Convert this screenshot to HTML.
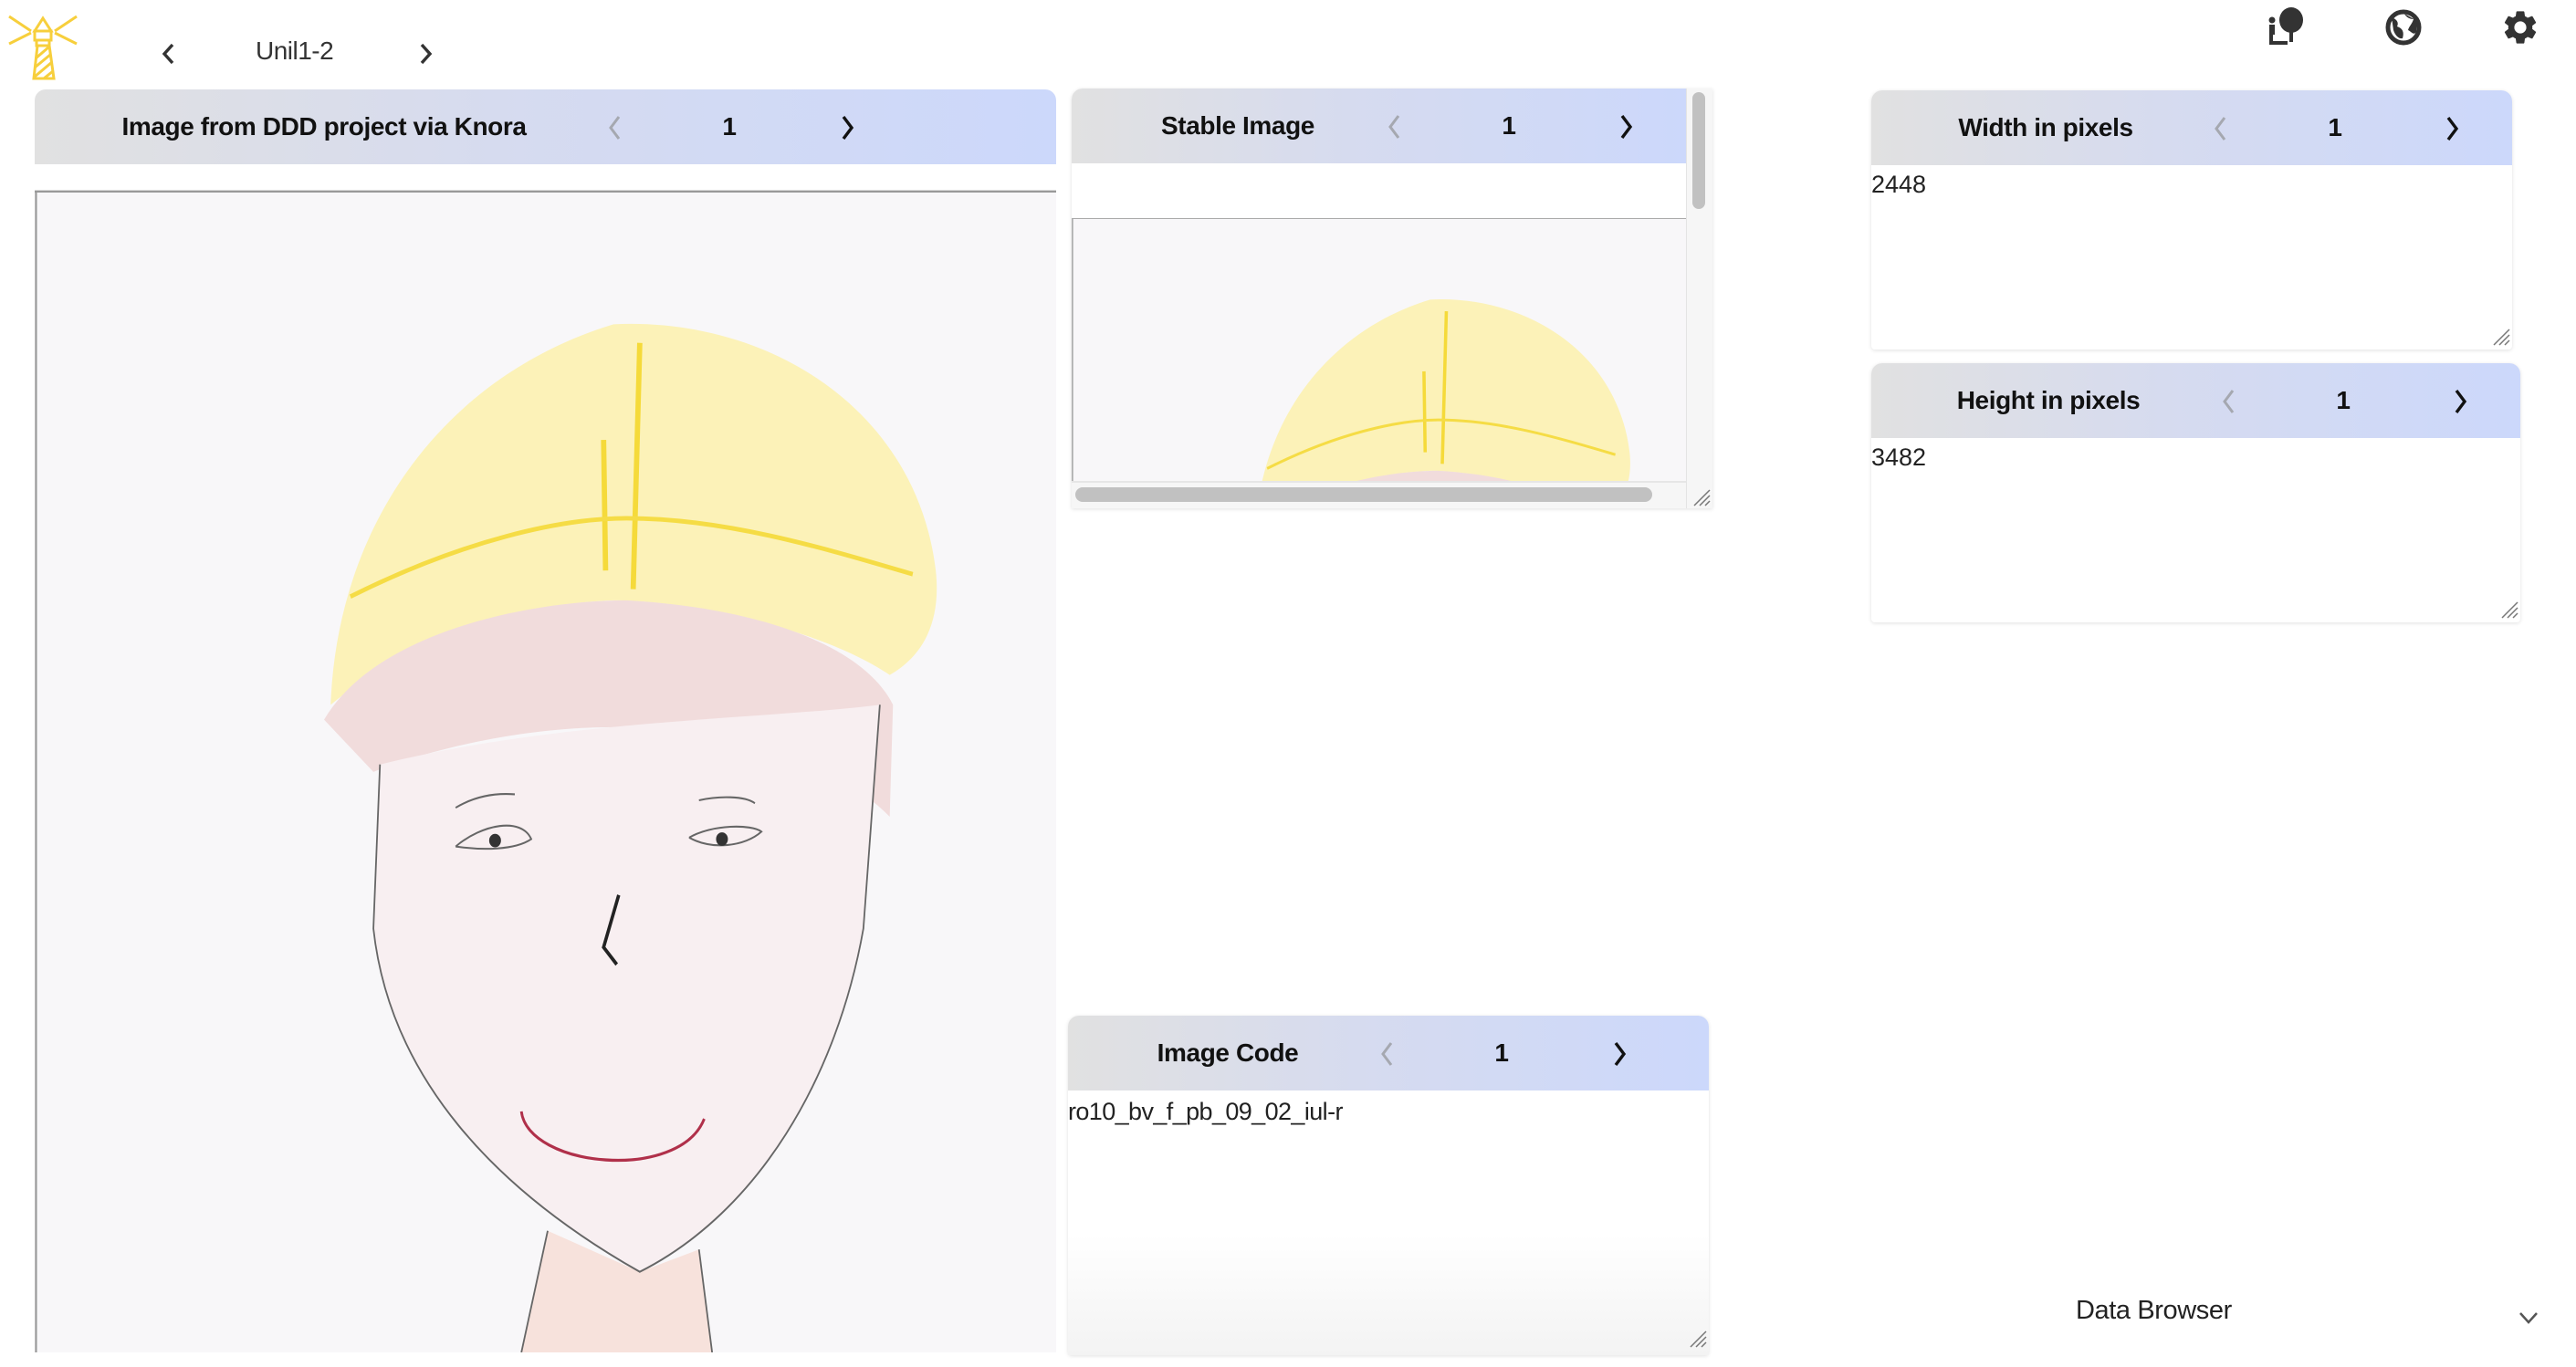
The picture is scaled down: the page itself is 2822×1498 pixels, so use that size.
<!DOCTYPE html>
<html><head><meta charset="utf-8"><style>
*{box-sizing:border-box;margin:0;padding:0}
body{width:2822px;height:1482px;overflow:hidden;background:#fff;font-family:"Liberation Sans",Arial,sans-serif;color:#111;position:relative}
.abs{position:absolute}
.panel{position:absolute;background:#fff;border-radius:12px 12px 4px 4px;box-shadow:0 1px 4px rgba(0,0,0,.12)}
.hdr{position:absolute;left:0;right:0;top:0;height:82px;border-radius:12px 12px 0 0;background:linear-gradient(90deg,#e1e1e1 0%,#d6dbef 45%,#ccd8fb 100%)}
.t{position:absolute;top:0;height:82px;line-height:82px;font-size:28px;font-weight:bold;letter-spacing:-0.4px;white-space:nowrap;transform:translateX(-50%)}
.ch{position:absolute;top:28px}
.val{position:absolute;font-size:27px;color:#222}
.rz{position:absolute;width:22px;height:22px}
</style></head><body>

<svg class="abs" style="left:8px;top:12px" width="78" height="76" viewBox="0 0 78 76" fill="none" stroke="#f7cf3c" stroke-width="3">
<path d="M30 22 L39 8 L48 22 Z"/><rect x="30" y="22" width="18" height="10"/><rect x="32" y="32" width="14" height="6"/>
<path d="M33 38 L29 74 L51 74 L46 38 Z"/>
<path d="M31 52 L45 40 M30 62 L47 48 M30 72 L49 56 M40 74 L50 66"/>
<path d="M2 6 L26 22 M76 6 L52 22 M2 36 L26 24 M76 36 L52 24"/>
</svg>

<svg class="abs" style="left:175px;top:46px" width="18" height="26" viewBox="0 0 18 26"><path d="M14 3 L5 13 L14 23" fill="none" stroke="#333" stroke-width="3.4"/></svg>
<div class="abs" style="left:280px;top:40px;font-size:28px;color:#333;letter-spacing:-0.5px">Unil1-2</div>
<svg class="abs" style="left:458px;top:46px" width="18" height="26" viewBox="0 0 18 26"><path d="M4 3 L13 13 L4 23" fill="none" stroke="#333" stroke-width="3.4"/></svg>

<svg class="abs" style="left:2483px;top:8px" width="46" height="42" viewBox="0 0 46 42" fill="#333">
<circle cx="6" cy="14" r="3.5"/><rect x="3" y="19" width="6" height="11"/><rect x="3" y="37" width="20" height="4"/>
<ellipse cx="27" cy="14" rx="13" ry="14"/><rect x="25" y="24" width="4" height="14"/><rect x="3" y="30" width="4" height="9"/>
</svg>
<svg class="abs" style="left:2612px;top:9px" width="42" height="42" viewBox="0 0 42 42">
<circle cx="21" cy="21" r="17" fill="none" stroke="#333" stroke-width="5"/>
<path d="M8 10 C14 12 16 16 14 20 C20 22 22 26 20 33 C16 34 12 30 10 24 Z" fill="#333"/>
<path d="M22 6 C24 10 28 12 32 12 C30 18 27 20 26 24 C30 26 32 30 35 26 L36 14 Z" fill="#333"/>
</svg>
<svg class="abs" style="left:2739px;top:8px" width="44" height="44" viewBox="0 0 24 24"><path fill="#333" d="M19.14 12.94c.04-.3.06-.61.06-.94s-.02-.64-.07-.94l2.030-1.58a.5.5 0 0 0 .12-.61l-1.92-3.32a.5.5 0 0 0-.59-.22l-2.39.96a7 7 0 0 0-1.62-.94l-.36-2.540a.48.48 0 0 0-.48-.41h-3.84a.48.48 0 0 0-.47.41l-.36 2.54a7.4 7.4 0 0 0-1.62.94l-2.39-.96a.5.5 0 0 0-.59.22L2.74 8.87a.5.5 0 0 0 .12.61l2.03 1.58c-.05.3-.09.63-.09.94s.02.64.07.94l-2.03 1.58a.5.5 0 0 0-.12.61l1.92 3.32c.12.22.37.29.59.22l2.39-.96c.5.38 1.03.7 1.62.94l.36 2.54c.05.24.24.41.48.41h3.84c.24 0 .44-.17.47-.41l.36-2.54a7 7 0 0 0 1.62-.94l2.39.96c.22.08.47 0 .59-.22l1.92-3.32a.5.5 0 0 0-.12-.61zM12 15.6A3.6 3.6 0 1 1 12 8.4a3.6 3.6 0 0 1 0 7.2z"/></svg>

<svg width="0" height="0" style="position:absolute">
<defs>
<symbol id="drw" viewBox="0 0 1560 1568" preserveAspectRatio="none">
<rect x="0" y="12" width="1560" height="1556" fill="#f8f7f9"/>
<line x1="0" y1="12" x2="1560" y2="12" stroke="#999" stroke-width="3"/>
<line x1="2" y1="12" x2="2" y2="1568" stroke="#999" stroke-width="3"/>
<path d="M450 700 C460 460 620 260 880 190 C1110 180 1340 300 1370 520 C1380 600 1340 640 1300 660 C1200 600 1000 560 880 560 C720 565 560 620 450 700 Z" fill="#fcf2b8"/>
<path d="M440 720 C520 600 760 560 900 560 C1100 570 1260 620 1305 700 L1300 850 C1200 760 1000 730 880 730 C740 730 600 760 515 790 Z" fill="#f1dcdc"/>
<path d="M525 780 L515 1000 C540 1200 700 1350 920 1460 C1100 1380 1220 1200 1260 1000 L1285 700 C1100 720 800 720 525 780 Z" fill="#f8eff1"/>
<path d="M780 1405 L740 1568 L1030 1568 L1010 1430 L920 1460 Z" fill="#f7e2dc"/>
<path d="M920 215 L910 545 M865 345 L868 520" stroke="#f5da3a" stroke-width="8" fill="none"/>
<path d="M480 555 C650 480 800 450 900 450 C1050 450 1200 490 1335 525" stroke="#f5dc45" stroke-width="6" fill="none"/>
<g fill="none" stroke="#666" stroke-width="2.5">
<path d="M525 780 L515 1000 C540 1200 700 1350 920 1460 C1100 1380 1220 1200 1260 1000 L1285 700"/>
<path d="M640 890 C680 860 740 850 755 880 C730 895 680 895 640 890"/>
<path d="M640 838 C670 822 700 818 730 820"/>
<path d="M995 878 C1030 860 1090 860 1105 870 C1080 890 1030 895 995 878"/>
<path d="M1010 828 C1040 822 1080 822 1095 832"/>
<path d="M888 955 L865 1025 L885 1048" stroke="#222" stroke-width="5"/>
<path d="M780 1405 L740 1568 M1010 1430 L1030 1568"/>
</g>
<circle cx="700" cy="882" r="9" fill="#333"/><circle cx="1045" cy="880" r="9" fill="#333"/>
<path d="M740 1245 C750 1320 980 1340 1018 1255" fill="none" stroke="#b0304a" stroke-width="4"/>
</symbol>
</defs>
</svg>

<!-- Panel 1 -->
<div class="panel" style="left:38px;top:98px;width:1119px;height:1400px;box-shadow:none">
<div class="hdr"></div>
<div class="t" style="left:317px">Image from DDD project via Knora</div>
<svg class="ch" style="left:627px" width="16" height="28" viewBox="0 0 16 28"><path d="M13 2 L4 14 L13 26" fill="none" stroke="#a5a8b0" stroke-width="3"/></svg>
<div class="t" style="left:761px">1</div>
<svg class="ch" style="left:883px" width="16" height="28" viewBox="0 0 16 28"><path d="M3 2 L12 14 L3 26" fill="none" stroke="#111" stroke-width="3.4"/></svg>
</div>
<div class="abs" style="left:38px;top:200px;width:1119px;height:1282px;overflow:hidden">
<svg class="abs" style="left:0;top:0" width="1124" height="1282"><use href="#drw" width="1124" height="1282"/></svg>
</div>

<!-- Panel 2 -->
<div class="panel" style="left:1174px;top:97px;width:702px;height:460px;border-radius:12px 0 0 0">
<div class="hdr" style="right:29px;border-radius:12px 0 0 0"></div>
<div class="t" style="left:182px">Stable Image</div>
<svg class="ch" style="left:345px" width="16" height="28" viewBox="0 0 16 28"><path d="M13 2 L4 14 L13 26" fill="none" stroke="#a5a8b0" stroke-width="3"/></svg>
<div class="t" style="left:479px">1</div>
<svg class="ch" style="left:600px" width="16" height="28" viewBox="0 0 16 28"><path d="M3 2 L12 14 L3 26" fill="none" stroke="#111" stroke-width="3.4"/></svg>
<div class="abs" style="right:0;top:0;width:29px;height:460px;background:#f6f6f6;border-left:1px solid #e4e4e4"></div>
<div class="abs" style="right:8px;top:4px;width:14px;height:128px;border-radius:7px;background:#c1c1c1"></div>
<div class="abs" style="left:0;top:142px;width:673px;height:288px;overflow:hidden;border-top:1px solid #aaa">
<svg class="abs" style="left:0;top:-8px" width="696" height="795"><use href="#drw" width="696" height="795"/></svg>
</div>
<div class="abs" style="left:0;top:430px;width:673px;height:30px;background:#f6f6f6;border-top:2px solid #e6e6e6"></div>
<div class="abs" style="left:4px;top:437px;width:632px;height:16px;border-radius:8px;background:#c1c1c1"></div>
<svg class="rz" style="right:2px;bottom:2px" viewBox="0 0 22 22"><path d="M4 21 L21 4 M10 21 L21 10 M16 21 L21 16" stroke="#777" stroke-width="1.5"/></svg>
</div>

<!-- Panel 3 -->
<div class="panel" style="left:1170px;top:1113px;width:702px;height:372px">
<div class="hdr"></div>
<div class="t" style="left:175px">Image Code</div>
<svg class="ch" style="left:341px" width="16" height="28" viewBox="0 0 16 28"><path d="M13 2 L4 14 L13 26" fill="none" stroke="#a5a8b0" stroke-width="3"/></svg>
<div class="t" style="left:475px">1</div>
<svg class="ch" style="left:597px" width="16" height="28" viewBox="0 0 16 28"><path d="M3 2 L12 14 L3 26" fill="none" stroke="#111" stroke-width="3.4"/></svg>
<div class="val" style="left:0;top:90px;letter-spacing:-0.6px">ro10_bv_f_pb_09_02_iul-r</div>
<div class="abs" style="left:0;right:0;top:240px;bottom:0;background:linear-gradient(#fff,#f3f3f3)"></div>
<svg class="rz" style="right:2px;top:342px" viewBox="0 0 22 22"><path d="M4 21 L21 4 M10 21 L21 10 M16 21 L21 16" stroke="#777" stroke-width="1.5"/></svg>
</div>

<!-- Panel 4 -->
<div class="panel" style="left:2050px;top:99px;width:702px;height:284px">
<div class="hdr"></div>
<div class="t" style="left:191px">Width in pixels</div>
<svg class="ch" style="left:374px" width="16" height="28" viewBox="0 0 16 28"><path d="M13 2 L4 14 L13 26" fill="none" stroke="#a5a8b0" stroke-width="3"/></svg>
<div class="t" style="left:508px">1</div>
<svg class="ch" style="left:629px" width="16" height="28" viewBox="0 0 16 28"><path d="M3 2 L12 14 L3 26" fill="none" stroke="#111" stroke-width="3.4"/></svg>
<div class="val" style="left:0;top:88px">2448</div>
<svg class="rz" style="right:2px;bottom:4px" viewBox="0 0 22 22"><path d="M4 21 L21 4 M10 21 L21 10 M16 21 L21 16" stroke="#777" stroke-width="1.5"/></svg>
</div>

<!-- Panel 5 -->
<div class="panel" style="left:2050px;top:398px;width:711px;height:284px">
<div class="hdr"></div>
<div class="t" style="left:194px">Height in pixels</div>
<svg class="ch" style="left:383px" width="16" height="28" viewBox="0 0 16 28"><path d="M13 2 L4 14 L13 26" fill="none" stroke="#a5a8b0" stroke-width="3"/></svg>
<div class="t" style="left:517px">1</div>
<svg class="ch" style="left:638px" width="16" height="28" viewBox="0 0 16 28"><path d="M3 2 L12 14 L3 26" fill="none" stroke="#111" stroke-width="3.4"/></svg>
<div class="val" style="left:0;top:88px">3482</div>
<svg class="rz" style="right:2px;bottom:4px" viewBox="0 0 22 22"><path d="M4 21 L21 4 M10 21 L21 10 M16 21 L21 16" stroke="#777" stroke-width="1.5"/></svg>
</div>

<div class="abs" style="left:2274px;top:1420px;font-size:29px;color:#222;letter-spacing:-0.4px">Data Browser</div>
<svg class="abs" style="left:2758px;top:1436px" width="24" height="16" viewBox="0 0 24 16"><path d="M3 3 L12 13 L21 3" fill="none" stroke="#555" stroke-width="2.5"/></svg>

</body></html>
